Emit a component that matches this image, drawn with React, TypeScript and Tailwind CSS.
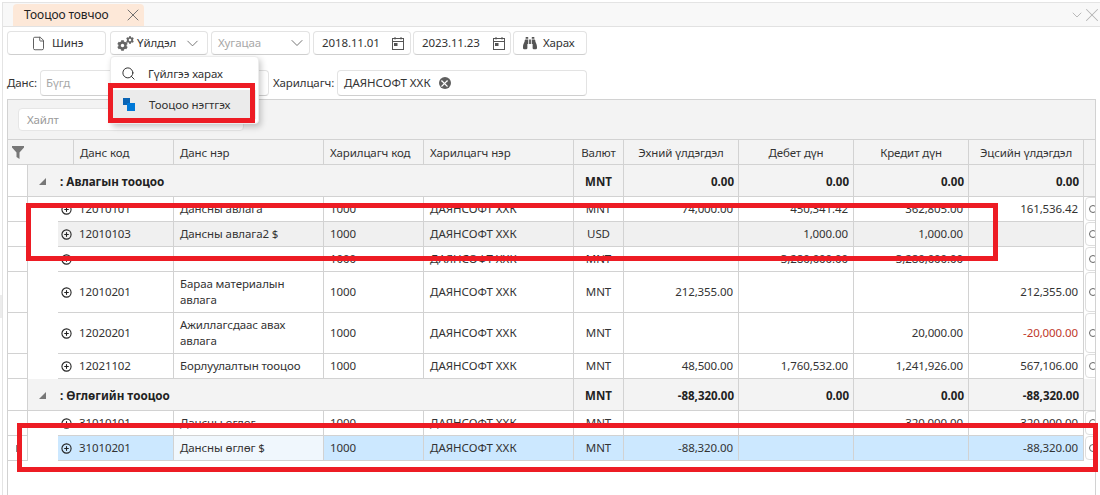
import React from "react";
import { ChevronDown, CirclePlus, File, Search, X } from "lucide-react";
import { FaBinoculars, FaCog } from "react-icons/fa";

type Row = {
  code: string; name: React.ReactNode; cur: string; open?: string; debit?: string; credit?: string; end?: string;
  tall?: boolean; tone?: "hover" | "selected"; endRed?: boolean; mark?: boolean;
};
type Group = { group: string; open: string; debit: string; credit: string; end: string };

const data: (Row | Group)[] = [
  { group: ": Авлагын тооцоо", open: "0.00", debit: "0.00", credit: "0.00", end: "0.00" },
  { code: "12010101", name: "Дансны авлага", cur: "MNT", open: "74,000.00", debit: "450,341.42", credit: "362,805.00", end: "161,536.42" },
  { code: "12010103", name: "Дансны авлага2 $", cur: "USD", debit: "1,000.00", credit: "1,000.00", tone: "hover" },
  { code: "", name: "", cur: "MNT", debit: "3,280,000.00", credit: "3,280,000.00" },
  { code: "12010201", name: "Бараа материалын авлага", cur: "MNT", open: "212,355.00", end: "212,355.00", tall: true },
  { code: "12020201", name: "Ажиллагсдаас авах авлага", cur: "MNT", credit: "20,000.00", end: "-20,000.00", tall: true, endRed: true },
  { code: "12021102", name: "Борлуулалтын тооцоо", cur: "MNT", open: "48,500.00", debit: "1,760,532.00", credit: "1,241,926.00", end: "567,106.00" },
  { group: ": Өглөгийн тооцоо", open: "-88,320.00", debit: "0.00", credit: "0.00", end: "-88,320.00" },
  { code: "31010101", name: "Дансны өглөг", cur: "MNT", credit: "320,000.00", end: "320,000.00" },
  { code: "31010201", name: "Дансны өглөг $", cur: "MNT", open: "-88,320.00", end: "-88,320.00", tone: "selected", mark: true },
];

const line = "border-[#d2d2d2]";

function Calendar() {
  return (
    <svg width="12" height="13" viewBox="0 0 12 13" fill="none" stroke="#555" strokeWidth="1" className="shrink-0">
      <rect x="0.5" y="1.5" width="11" height="11" />
      <path d="M0.5 4.5H11.5M3 0V2.5M9 0V2.5" />
      <rect x="2.5" y="6.5" width="2.5" height="2" fill="#555" />
    </svg>
  );
}

function Btn({ className, children }: { className: string; children: React.ReactNode }) {
  return (
    <div className={`h-[24px] flex items-center shrink-0 bg-white border border-[#e3e3e3] border-b-[#cfcfcf] rounded-[4px] ${className}`}>
      {children}
    </div>
  );
}

function HeadCell({ className, children }: { className: string; children?: React.ReactNode }) {
  return <div className={`h-full shrink-0 flex items-center border-r ${line} ${className}`}>{children}</div>;
}

function Num({ w, bold, value, red, bg }: { w: string; bold?: boolean; value?: string; red?: boolean; bg?: string }) {
  return (
    <div className={`h-full shrink-0 flex items-center justify-end border-r border-b ${line} ${w} ${bold ? "font-bold pr-[4px] pt-[2px] text-[#222] tracking-normal" : "pr-[5px]"} ${red ? "text-[#c0392b]" : ""} ${bg ?? ""}`}>
      {value}
    </div>
  );
}

function EndButton() {
  return (
    <div className="h-full w-[11px] shrink-0 overflow-hidden pb-[1px] bg-transparent">
      <div className="h-full w-[20px] ml-[1px] bg-white border border-[#dedede] rounded-[4px] flex items-center pl-[3px]">
        <div className="w-[8px] h-[8px] rounded-full border border-[#666] shrink-0" />
      </div>
    </div>
  );
}

function GroupRow({ g }: { g: Group }) {
  const bg = "bg-[#f3f3f3]";
  return (
    <div className="flex h-[32px]">
      <div className={`w-[20px] shrink-0 border-r border-b ${line}`} />
      <div className={`w-[546px] shrink-0 flex items-center pt-[2px] border-r border-b ${line} ${bg} font-bold text-[#222] text-[11.7px] tracking-normal`}>
        <svg className="ml-[11px] mr-[14px]" width="7" height="7" viewBox="0 0 7 7"><path d="M7 0V7H0Z" fill="#777" /></svg>
        {g.group}
      </div>
      <div className={`w-[50px] shrink-0 flex items-center justify-center pt-[2px] border-r border-b ${line} ${bg} font-bold text-[#222] tracking-normal`}>MNT</div>
      <Num w="w-[115px]" bold value={g.open} bg={bg} />
      <Num w="w-[115px]" bold value={g.debit} bg={bg} />
      <Num w="w-[115px]" bold value={g.credit} bg={bg} />
      <Num w="w-[115px]" bold value={g.end} bg={bg} />
      <div className={`w-[11px] shrink-0 border-b ${line} ${bg}`} />
    </div>
  );
}

function DataRow({ r }: { r: Row }) {
  const bg = r.tone === "hover" ? "bg-[#f0f0f0]" : r.tone === "selected" ? "bg-[#cce8ff]" : "bg-white";
  const nameBg = r.tone === "selected" ? "bg-[#f0f7fd]" : bg;
  const base = `h-full shrink-0 flex items-center border-r border-b ${line}`;
  return (
    <div className={`flex ${r.tall ? "h-[41px]" : "h-[25px]"}`}>
      <div className={`w-[20px] shrink-0 border-r border-b ${line} flex items-center`}>
        {r.mark && <div className="ml-[8px] w-[1px] h-[7px] bg-[#8a8a8a]" />}
      </div>
      <div className="w-[30px] shrink-0" />
      <div className={`${base} ${bg} w-[116px] pl-[3px] gap-[7px]`}>
        <CirclePlus size={11} strokeWidth={2.4} className="text-[#222] shrink-0" />
        {r.code}
      </div>
      <div className={`${base} ${nameBg} w-[150px] pl-[6px] pr-[4px] leading-[16px]`}>{r.name}</div>
      <div className={`${base} ${bg} w-[100px] pl-[6px]`}>1000</div>
      <div className={`${base} ${bg} w-[150px] pl-[6px] tracking-normal`}>ДАЯНСОФТ ХХК</div>
      <div className={`${base} ${bg} w-[50px] justify-center`}>{r.cur}</div>
      <Num w="w-[115px]" value={r.open} bg={bg} />
      <Num w="w-[115px]" value={r.debit} bg={bg} />
      <Num w="w-[115px]" value={r.credit} bg={bg} />
      <Num w="w-[115px]" value={r.end} red={r.endRed} bg={bg} />
      <EndButton />
    </div>
  );
}

export default function App() {
  return (
    <div className="relative w-[1100px] h-[495px] overflow-hidden bg-white pt-[2px] pl-[2px] font-['Noto_Sans','Open_Sans',sans-serif] text-[11.5px] tracking-[-0.1px] text-[#333]">
      <div className="w-[1098px] h-[493px] flex flex-col border-t border-l border-[#e4e4e4]">
        {/* tab strip */}
        <div className="h-[24px] shrink-0 flex items-end justify-between bg-[#f8f8f8] border-b border-[#e2e2e2]">
          <div className="ml-[10px] w-[131px] h-[22px] flex items-center bg-[#fde8d8] rounded-t-[4px] pl-[11px] pr-[1px] justify-between text-[#222] text-[12px]">
            <span>Тооцоо товчоо</span>
            <X size={20} strokeWidth={1.1} className="text-[#666]" />
          </div>
          <div className="flex items-center h-full -mr-[3px] text-[#b5b5b5]">
            <ChevronDown size={16} strokeWidth={1.4} />
            <X size={22} strokeWidth={1.1} className="-ml-[4px]" />
          </div>
        </div>

        {/* toolbar */}
        <div className="h-[43px] shrink-0 pt-[4px] pl-[4px] flex items-start">
          <Btn className="w-[99px] pl-[23px]">
            <File size={15} strokeWidth={1.5} className="text-[#555]" />
            <span className="ml-[6px]">Шинэ</span>
          </Btn>
          <Btn className="w-[98px] ml-[4px] pl-[6px]">
            <span className="flex w-[16px] h-[15px] shrink-0 text-[#666]">
              <FaCog size={11} className="self-end shrink-0" />
              <FaCog size={8} className="self-start -ml-[2px] shrink-0" />
            </span>
            <span className="ml-[4px]">Үйлдэл</span>
            <ChevronDown size={19} strokeWidth={1.1} className="ml-[7px] text-[#666] shrink-0" />
          </Btn>
          <Btn className="w-[99px] ml-[3px] pl-[6px] text-[#a8a8a8]">
            <span>Хугацаа</span>
            <ChevronDown size={20} strokeWidth={1.1} className="ml-[26px] text-[#666] shrink-0" />
          </Btn>
          <Btn className="w-[98px] ml-[3px] pl-[8px] gap-[12px]">
            <span>2018.11.01</span>
            <Calendar />
          </Btn>
          <Btn className="w-[98px] ml-[2px] pl-[8px] gap-[13px]">
            <span>2023.11.23</span>
            <Calendar />
          </Btn>
          <Btn className="w-[74px] ml-[2px] pl-[9px] gap-[6px]">
            <FaBinoculars size={14} className="text-[#555]" />
            <span>Харах</span>
          </Btn>
        </div>

        {/* filters */}
        <div className="h-[29px] shrink-0 pl-[4px] flex items-start">
          <div className="w-[33px] h-[26px] flex items-center">Данс:</div>
          <div className="w-[229px] h-[26px] flex items-center pl-[5px] bg-white border border-[#e3e3e3] border-b-[#cfcfcf] rounded-[4px] text-[#a8a8a8]">Бүгд</div>
          <div className="w-[64px] h-[26px] ml-[4px] flex items-center">Харилцагч:</div>
          <div className="w-[250px] h-[26px] flex items-center pl-[6px] gap-[8px] bg-white border border-[#e3e3e3] border-b-[#cfcfcf] rounded-[4px]">
            <span className="tracking-normal">ДАЯНСОФТ ХХК</span>
            <span className="w-[12px] h-[12px] rounded-full bg-[#5f5f5f] flex items-center justify-center">
              <X size={11} strokeWidth={2.5} className="text-white" />
            </span>
          </div>
        </div>

        {/* grid */}
        <div className={`ml-[4px] w-[1089px] flex-1 min-h-0 overflow-hidden border-t border-l border-r ${line}`}>
          <div className={`h-[40px] bg-[#f3f3f3] border-b ${line} pt-[8px] pl-[10px]`}>
            <div className="w-[226px] h-[23px] flex items-center pl-[8px] bg-white border border-[#e6e6e6] rounded-[4px] text-[#9a9a9a]">Хайлт</div>
          </div>
          <div className={`h-[25px] flex bg-[#f3f3f3] border-b ${line} text-[#333]`}>
            <HeadCell className="w-[66px] pl-[4px]">
              <svg width="12" height="13" viewBox="0 0 12 13"><path d="M0 0H12V1.5L7.5 6.5V13L4.5 11V6.5L0 1.5Z" fill="#777" /></svg>
            </HeadCell>
            <HeadCell className="w-[100px] pl-[6px] pt-[2px]">Данс код</HeadCell>
            <HeadCell className="w-[150px] pl-[6px] pt-[2px]">Данс нэр</HeadCell>
            <HeadCell className="w-[100px] pl-[6px] pt-[2px]">Харилцагч код</HeadCell>
            <HeadCell className="w-[150px] pl-[6px] pt-[2px]">Харилцагч нэр</HeadCell>
            <HeadCell className="w-[50px] justify-center pt-[2px]">Валют</HeadCell>
            <HeadCell className="w-[115px] justify-center pt-[2px]">Эхний үлдэгдэл</HeadCell>
            <HeadCell className="w-[115px] justify-center pt-[2px]">Дебет дүн</HeadCell>
            <HeadCell className="w-[115px] justify-center pt-[2px]">Кредит дүн</HeadCell>
            <HeadCell className="w-[115px] justify-center pt-[2px]">Эцсийн үлдэгдэл</HeadCell>
          </div>
          {data.map((d, i) => ("group" in d ? <GroupRow key={i} g={d} /> : <DataRow key={i} r={d} />))}
        </div>
      </div>

      {/* stray sliver on the far left */}
      <div className="absolute left-0 top-[295px] w-[2px] h-[23px] bg-[#ececec]" />

      {/* dropdown menu */}
      <div className="absolute left-[110px] top-[56px] w-[149px] h-[68px] bg-white rounded-[4px] border border-[#ececec] shadow-[2px_3px_6px_rgba(0,0,0,0.22)]">
        <div className="h-[33px] flex items-center pl-[10px] gap-[12px]">
          <Search size={15} strokeWidth={1.6} className="text-[#333]" />
          <span>Гүйлгээ харах</span>
        </div>
        <div className="h-[29px] mx-[2px] flex items-center pl-[10px] gap-[13px] bg-[#ebebeb]">
          <svg width="13" height="14" viewBox="0 0 13 14" className="shrink-0">
            <rect x="0" y="0" width="7" height="7" fill="#0a64b4" />
            <rect x="4" y="5" width="8" height="8" fill="#0078d7" />
          </svg>
          <span>Тооцоо нэгтгэх</span>
        </div>
      </div>

      {/* red annotation frames */}
      <div className="absolute left-[26px] top-[203px] w-[972px] h-[58px] border-[5px] border-[#ed1c24]" />
      <div className="absolute left-[17px] top-[423px] w-[1081px] h-[49px] border-[5px] border-[#ed1c24]" />
      <div className="absolute left-[108px] top-[83px] w-[147px] h-[40px] border-[5px] border-[#ed1c24]" />
    </div>
  );
}
